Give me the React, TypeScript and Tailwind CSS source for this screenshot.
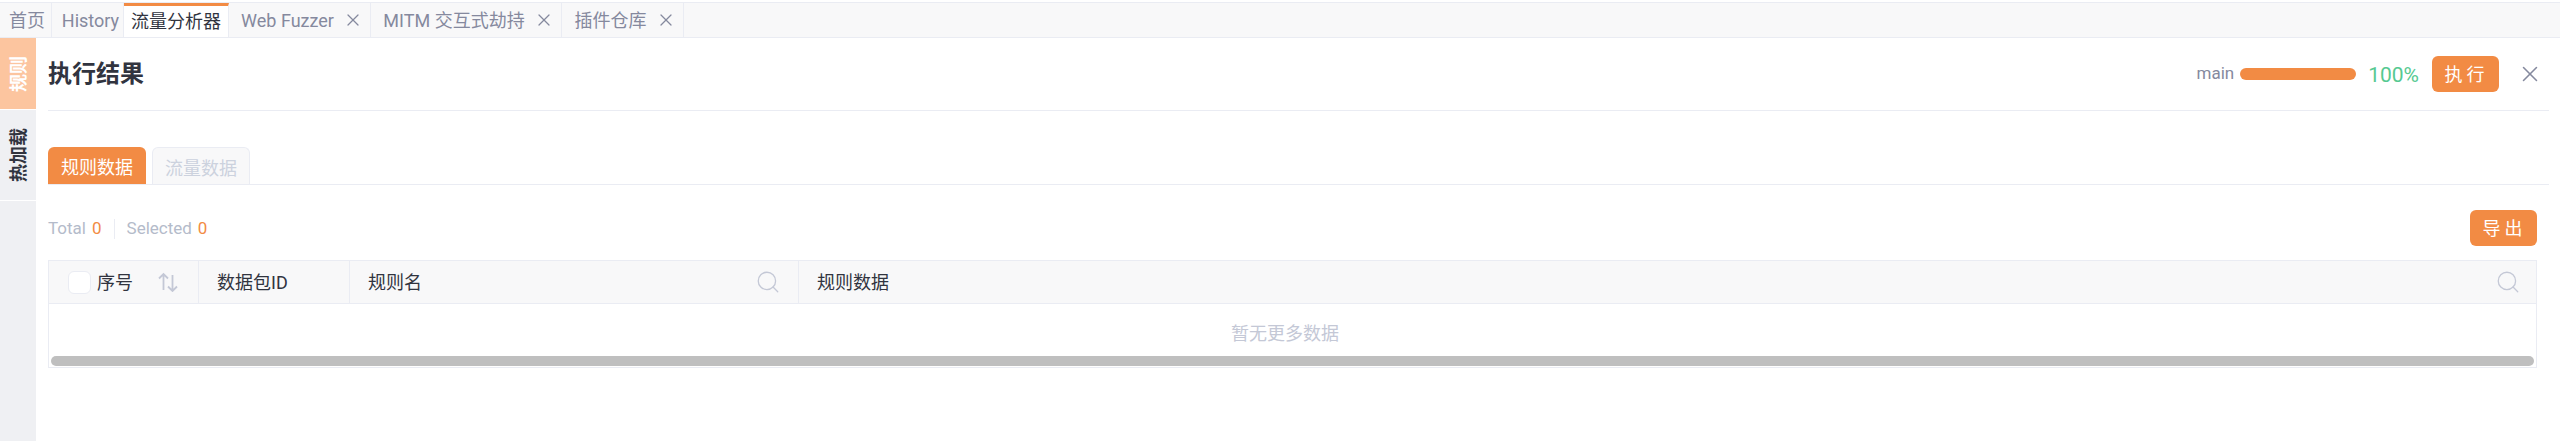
import { Search, X } from 'lucide-react';

const font = "font-['Roboto','Noto_Sans_CJK_SC',sans-serif]";

const tabs = [
  { name: '首页', width: 'w-[52px] pl-[3px]' },
  { name: 'History', width: 'w-[72px] pl-[6px]' },
  { name: '流量分析器', width: 'w-[105px]', active: true },
  { name: 'Web Fuzzer', width: 'w-[142px] pl-[5px]', closable: true },
  { name: 'MITM 交互式劫持', width: 'w-[191px] pl-[5px]', closable: true },
  { name: '插件仓库', width: 'w-[122px] pl-[5px]', closable: true },
];

function TabBar() {
  return (
    <div className="flex h-[38px] border-b border-t-2 border-t-white border-b-[#eaecf3] bg-[#f8f8f9]">
      <div className="flex w-full border-t border-[#eaecf3]">
        {tabs.map((tab) => (
          <div
            key={tab.name}
            className={`flex ${tab.width} shrink-0 items-center justify-center gap-[9px] border-r border-[#eaecf3] text-[18px] ${
              tab.active ? 'border-t-[3px] border-t-[#f28b44] bg-white text-[#31343f]' : 'text-[#85899e]'
            }`}
          >
            <span>{tab.name}</span>
            {tab.closable && <X size={20} strokeWidth={1.5} className="text-[#85899e]" />}
          </div>
        ))}
      </div>
    </div>
  );
}

function Sidebar() {
  return (
    <div className="flex w-9 shrink-0 flex-col bg-[#eff0f3]">
      <div className="flex h-[72px] items-center justify-center border-b border-white bg-[#fcc59f]">
        <span className="rotate-180 text-[18px] font-bold text-white [text-orientation:sideways] [writing-mode:vertical-rl]">
          规则
        </span>
      </div>
      <div className="flex h-[91px] items-center justify-center border-b border-white">
        <span className="rotate-180 text-[18px] font-bold text-[#31343f] [text-orientation:sideways] [writing-mode:vertical-rl]">
          热加载
        </span>
      </div>
    </div>
  );
}

function SortIcon() {
  return (
    <svg width="20" height="20" viewBox="0 0 20 20" fill="none" stroke="#c4c8d6" strokeWidth="1.8">
      <path d="M5.500 18V2M1 6.500 5.500 2 10 6.500" />
      <path d="M14.500 3v16M10 14.500 14.500 19l4.500-4.500" />
    </svg>
  );
}

export default function App() {
  return (
    <div className={`flex h-[441px] w-[2560px] flex-col overflow-hidden bg-white ${font}`}>
      <TabBar />
      <div className="flex flex-1">
        <Sidebar />
        <div className="flex-1 pl-3 pr-[11px]">
          <div className="flex h-[73px] items-center justify-between border-b border-[#eaecf3]">
            <h1 className="text-[24px] font-bold text-[#31343f]">执行结果</h1>
            <div className="flex items-center">
              <span className="text-[17px] text-[#85899e]">main</span>
              <div className="ml-[6px] h-3 w-[116px] rounded-full bg-[#f28b44]" />
              <span className="ml-[12px] mt-1 text-[21px] text-[#56c991]">100%</span>
              <button className="ml-[13px] h-9 w-[67px] rounded-md bg-[#f28b44] pl-[2px] text-[18px] tracking-[4px] text-white">
                执行
              </button>
              <X size={26} strokeWidth={1.4} className="ml-[18px] mr-[6px] text-[#85899e]" />
            </div>
          </div>

          <div className="mt-9 flex h-[38px] gap-[6px] border-b border-[#eaecf3]">
            <div className="flex w-[98px] items-center justify-center rounded-t-md bg-[#f28b44] pt-1 text-[18px] text-white">
              规则数据
            </div>
            <div className="flex w-[98px] items-center justify-center rounded-t-md border border-b-0 border-[#eaecf3] bg-[#f8f8f9] pt-1 text-[18px] text-[#ccd2de]">
              流量数据
            </div>
          </div>

          <div className="mr-3 mt-[25px] flex h-9 items-center justify-between">
            <div className="flex items-center pt-[2px] text-[17px] text-[#b4bbca]">
              <span>Total</span>
              <span className="ml-[6px] text-[#f28b44]">0</span>
              <span className="mx-3 h-5 w-px bg-[#eaecf3]" />
              <span>Selected</span>
              <span className="ml-[6px] text-[#f28b44]">0</span>
            </div>
            <button className="h-9 w-[67px] rounded-md bg-[#f28b44] pl-[2px] text-[18px] tracking-[4px] text-white">
              导出
            </button>
          </div>

          <div className="mr-3 mt-[14px] border border-[#eaecf3]">
            <div className="flex h-[43px] border-b border-[#eaecf3] bg-[#f8f8f9] text-[18px] text-[#31343f]">
              <div className="flex w-[150px] items-center border-r border-[#eaecf3] pl-[19px]">
                <span className="h-[23px] w-[23px] rounded-md border border-[#eaecf3] bg-white" />
                <span className="ml-[6px]">序号</span>
                <span className="ml-[25px]">
                  <SortIcon />
                </span>
              </div>
              <div className="flex w-[151px] items-center border-r border-[#eaecf3] pl-[18px]">数据包ID</div>
              <div className="flex w-[449px] items-center justify-between border-r border-[#eaecf3] pl-[18px] pr-[17px]">
                <span>规则名</span>
                <Search size={26} strokeWidth={1.2} className="text-[#c4c8d6]" />
              </div>
              <div className="flex flex-1 items-center justify-between pl-[18px] pr-[15px]">
                <span>规则数据</span>
                <Search size={26} strokeWidth={1.2} className="text-[#c4c8d6]" />
              </div>
            </div>
            <div className="flex h-[52px] items-center justify-center pr-[15px] pt-[6px] text-[18px] text-[#c4c8d6]">
              <span>暂无更多数据</span>
            </div>
            <div className="mx-[2px] mb-px h-[10px] rounded-full bg-[#bfbfbf]" />
          </div>
        </div>
      </div>
    </div>
  );
}
